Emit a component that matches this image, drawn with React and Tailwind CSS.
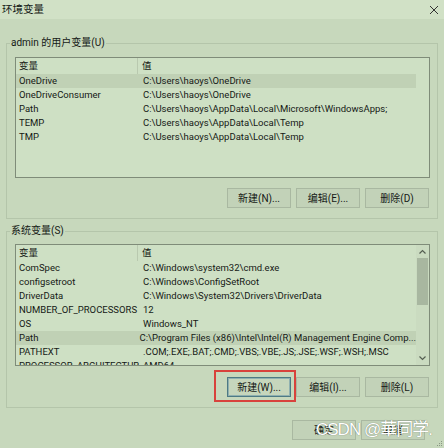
const userVars = [
  ["OneDrive", "C:\\Users\\haoys\\OneDrive", true],
  ["OneDriveConsumer", "C:\\Users\\haoys\\OneDrive"],
  ["Path", "C:\\Users\\haoys\\AppData\\Local\\Microsoft\\WindowsApps;"],
  ["TEMP", "C:\\Users\\haoys\\AppData\\Local\\Temp"],
  ["TMP", "C:\\Users\\haoys\\AppData\\Local\\Temp"],
]

const sysVars = [
  ["ComSpec", "C:\\Windows\\system32\\cmd.exe"],
  ["configsetroot", "C:\\Windows\\ConfigSetRoot"],
  ["DriverData", "C:\\Windows\\System32\\Drivers\\DriverData"],
  ["NUMBER_OF_PROCESSORS", "12"],
  ["OS", "Windows_NT"],
  ["Path", "C:\\Program Files (x86)\\Intel\\Intel(R) Management Engine Comp...", true],
  ["PATHEXT", ".COM;.EXE;.BAT;.CMD;.VBS;.VBE;.JS;.JSE;.WSF;.WSH;.MSC"],
  ["PROCESSOR_ARCHITECTURE", "AMD64"],
]

const Row = ({ name, value, active }) => (
  <div className={`h-[14px] flex items-center whitespace-nowrap ${active ? "bg-[#c0d1b5]" : ""}`}>
    <div className="w-[123px] pl-[3px] overflow-hidden">{name}</div>
    <div className="pl-[4px]">{value}</div>
  </div>
)

const VarList = ({ rows, height, scroll }) => (
  <div className={`w-[415px] ${height} border border-[#7f8c79] bg-[#cee0c4] flex overflow-hidden`}>
    <div className="w-[400px] flex flex-col">
      <div className="h-[16px] flex items-center shrink-0">
        <div className="w-[122px] pl-[3px] border-r border-[#b9c9af] h-full flex items-center">变量</div>
        <div className="pl-[4px]">值</div>
      </div>
      {rows.map(([n, v, a]) => (
        <Row key={n} name={n} value={v} active={a} />
      ))}
    </div>
    {scroll && (
      <div className="w-[13px] flex flex-col items-center bg-[#cadbc0]">
        <svg width="9" height="12" viewBox="0 0 9 12" className="mt-[1px] shrink-0">
          <path d="M1.5 7.5 L4.5 4.5 L7.5 7.5" fill="none" stroke="#555f52" strokeWidth="1.2" />
        </svg>
        <div className="w-[11px] h-[47px] bg-[#a8b7a0] shrink-0"></div>
        <div className="flex-1"></div>
        <svg width="9" height="12" viewBox="0 0 9 12" className="mb-[1px] shrink-0">
          <path d="M1.5 4.5 L4.5 7.5 L7.5 4.5" fill="none" stroke="#555f52" strokeWidth="1.2" />
        </svg>
      </div>
    )}
  </div>
)

const Btn = ({ children, focused }) => (
  <button
    className={`w-[64px] h-[20px] flex items-center justify-center text-[10px] ${
      focused ? "border border-[#4d7a84] bg-[#c6d6bc] shadow-[inset_0_0_0_1px_#8fb0b0]" : "border border-[#a9b8a1] bg-[#c2d2b8]"
    }`}
  >
    {children}
  </button>
)

export default function App() {
  return (
    <div
      className="relative w-[444px] h-[448px] overflow-hidden bg-[#c7d8bc] text-[9.5px] text-[#151915]"
      style={{ fontFamily: "Roboto, 'Noto Sans CJK SC', sans-serif" }}
    >
      <div className="h-[19px] bg-[#d1e1c6] flex items-center justify-between pl-[2px] pr-[5px]">
        <span className="text-[10.5px]">环境变量</span>
        <svg width="10" height="10" viewBox="0 0 10 10">
          <path d="M1 1 L9 9 M9 1 L1 9" stroke="#333" strokeWidth="1" />
        </svg>
      </div>

      <div className="relative mt-[24px] ml-[6px] w-[432px] border border-[#b4c5aa] pl-[8px] pt-[13px] pb-[10px]">
        <span className="absolute -top-[8px] left-[3px] px-[1px] bg-[#c7d8bc] leading-[14px] text-[10px]">admin 的用户变量(U)</span>
        <VarList rows={userVars} height="h-[121px]" />
        <div className="w-[415px] mt-[10px] pr-[1px] flex justify-end gap-[5px]">
          <Btn>新建(N)...</Btn>
          <Btn>编辑(E)...</Btn>
          <Btn>删除(D)</Btn>
        </div>
      </div>

      <div className="relative mt-[12px] ml-[6px] w-[432px] border border-[#b4c5aa] pl-[8px] pt-[12px] pb-[10px]">
        <span className="absolute -top-[8px] left-[3px] px-[1px] bg-[#c7d8bc] leading-[14px] text-[10px]">系统变量(S)</span>
        <VarList rows={sysVars} height="h-[122px]" scroll />
        <div className="relative w-[415px] mt-[11px] pr-[1px] flex justify-end gap-[5px]">
          <div className="relative">
            <Btn focused>新建(W)...</Btn>
            <div className="absolute -left-[13px] -top-[7px] w-[82px] h-[32px] border-2 border-[#d8423c]"></div>
          </div>
          <Btn>编辑(I)...</Btn>
          <Btn>删除(L)</Btn>
        </div>
      </div>

      <div className="mt-[12px] pr-[19px] flex justify-end gap-[5px]">
        <Btn>确定</Btn>
        <Btn>取消</Btn>
      </div>

      <div
        className="absolute left-[316px] top-[419px] text-[17px] leading-[22px] tracking-[-1px] text-white whitespace-nowrap [text-shadow:0_0_1px_#5f6a5a]"
        style={{ fontFamily: "'Liberation Sans', 'Noto Sans CJK SC', sans-serif" }}
      >
        CSDN @華同学.
      </div>

      <svg width="6" height="6" viewBox="0 0 6 6" className="absolute right-[1px] bottom-[1px]">
        <rect x="4" y="0" width="1" height="1" fill="#8a9884" />
        <rect x="2" y="2" width="1" height="1" fill="#8a9884" />
        <rect x="4" y="2" width="1" height="1" fill="#8a9884" />
        <rect x="0" y="4" width="1" height="1" fill="#8a9884" />
        <rect x="2" y="4" width="1" height="1" fill="#8a9884" />
        <rect x="4" y="4" width="1" height="1" fill="#8a9884" />
      </svg>
    </div>
  )
}
